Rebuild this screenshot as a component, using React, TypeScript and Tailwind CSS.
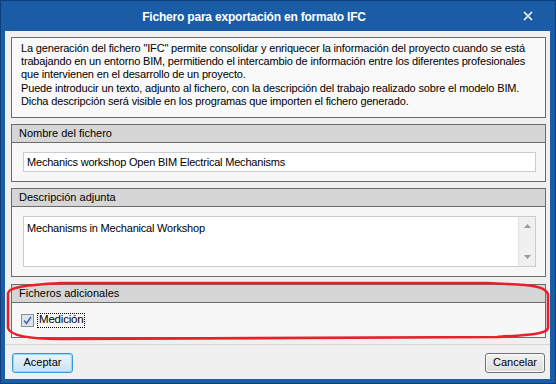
import React from 'react';

const font = { fontFamily: '"Liberation Sans", Arial, sans-serif' };

function GroupBox({ title, children }: { title: string; children: React.ReactNode }) {
  return (
    <div className="border border-[#6b6b6b] bg-[#f7f7f7] flex flex-col">
      <div className="h-[18px] bg-[#d6d6d6] border-b border-[#6b6b6b] flex items-center pl-[7px] text-[11px] text-black">
        {title}
      </div>
      {children}
    </div>
  );
}

export default function App() {
  return (
    <div
      className="relative w-[556px] h-[384px] bg-[#1b5ca7] border border-[#0e3f7c] flex flex-col overflow-hidden"
      style={font}
    >
      {/* Barra de título */}
      <div className="h-[30px] flex items-center shrink-0">
        <div className="w-[16px]" />
        <div className="flex-1 text-center text-white font-bold text-[12px] tracking-[-0.2px] pt-[1px]">
          Fichero para exportación en formato IFC
        </div>
        <div className="w-[64px] flex items-center justify-end pr-[22px]">
          <svg width="10" height="10" viewBox="0 0 10 10">
            <path d="M1 1 L9 9 M9 1 L1 9" stroke="#ffffff" strokeWidth="1.6" />
          </svg>
        </div>
      </div>

      {/* Contenido */}
      <div className="flex-1 ml-[4px] mr-[5px] mb-[4px] bg-[#f0f0f0] flex flex-col">
        <div className="flex flex-col gap-[6px] pt-[6px] pl-[6px] pr-[4px]">
          {/* Texto informativo */}
          <div className="h-[81px] border border-[#6b6b6b] bg-[#f9f9f9] pl-[9px] pt-[4px] text-[11px] leading-[13.2px] text-black tracking-[-0.16px] whitespace-nowrap">
            La generación del fichero "IFC" permite consolidar y enriquecer la información del proyecto cuando se está
            <br />
            trabajando en un entorno BIM, permitiendo el intercambio de información entre los diferentes profesionales
            <br />
            que intervienen en el desarrollo de un proyecto.
            <br />
            Puede introducir un texto, adjunto al fichero, con la descripción del trabajo realizado sobre el modelo BIM.
            <br />
            Dicha descripción será visible en los programas que importen el fichero generado.
          </div>

          <GroupBox title="Nombre del fichero">
            <div className="pl-[11px] pr-[9px] pt-[9px] pb-[9px]">
              <div className="h-[20px] bg-white border border-[#c9ccd3] flex items-center pl-[3px] text-[11px] tracking-[-0.2px] text-black">
                Mechanics workshop Open BIM Electrical Mechanisms
              </div>
            </div>
          </GroupBox>

          <GroupBox title="Descripción adjunta">
            <div className="pl-[11px] pr-[9px] pt-[9px] pb-[9px]">
              <div className="h-[51px] bg-white border border-[#c9ccd3] flex">
                <div className="flex-1 pl-[3px] pt-[3px] text-[11px] tracking-[-0.2px] text-black">
                  Mechanisms in Mechanical Workshop
                </div>
                <div className="w-[17px] bg-[#f0f0f0] border-l border-[#e2e2e2] flex flex-col items-center justify-between py-[7px]">
                  <svg width="7" height="4" viewBox="0 0 7 4">
                    <path d="M0 4 L3.5 0 L7 4 Z" fill="#9a9a9a" />
                  </svg>
                  <svg width="7" height="4" viewBox="0 0 7 4">
                    <path d="M0 0 L7 0 L3.5 4 Z" fill="#9a9a9a" />
                  </svg>
                </div>
              </div>
            </div>
          </GroupBox>

          <div className="mt-[1px]">
            <GroupBox title="Ficheros adicionales">
              <div className="h-[34px] flex items-center pl-[9px]">
                <div className="w-[13px] h-[13px] border border-[#8e8f8f] bg-[#dde4ee] flex items-center justify-center">
                  <svg width="9" height="9" viewBox="0 0 9 9">
                    <path d="M1 4.5 L3.5 7.5 L8 1" stroke="#4b62a0" strokeWidth="1.6" fill="none" />
                  </svg>
                </div>
                <div className="ml-[3px] px-[1px] h-[15px] flex items-center border border-dotted border-black text-[11.5px] tracking-[-0.2px] text-black">
                  Medición
                </div>
              </div>
            </GroupBox>
          </div>
        </div>

        {/* Botones */}
        <div className="mt-[6px] border-t border-[#d6d6d6] flex-1 flex items-center justify-between pl-[7px] pr-[5px] pt-[1px]">
          <button className="w-[61px] h-[20px] rounded-[3px] border border-[#3c98d4] bg-gradient-to-b from-[#eaf6fd] to-[#c6e3f3] shadow-[inset_0_0_0_1px_#9fd6f3] text-[11px] text-black">
            Aceptar
          </button>
          <button className="w-[60px] h-[20px] rounded-[3px] border border-[#707070] bg-gradient-to-b from-[#f3f3f3] to-[#dcdcdc] shadow-[inset_0_0_0_1px_#fbfbfb] text-[11px] text-black">
            Cancelar
          </button>
        </div>
      </div>

      {/* Marca roja a mano */}
      <svg className="absolute left-0 top-0 pointer-events-none" width="556" height="384" viewBox="0 0 556 384">
        <path
          d="M60 282 L486 282 L506 283 C528 284 546 285 547 294 L547 327 C546 333 528 334 496 336 L60 338 C28 338 9 335 7 327 L7 292 C8 286 26 284 60 282 Z"
          stroke="#e8202a"
          strokeWidth="2.6"
          fill="none"
        />
      </svg>
    </div>
  );
}
